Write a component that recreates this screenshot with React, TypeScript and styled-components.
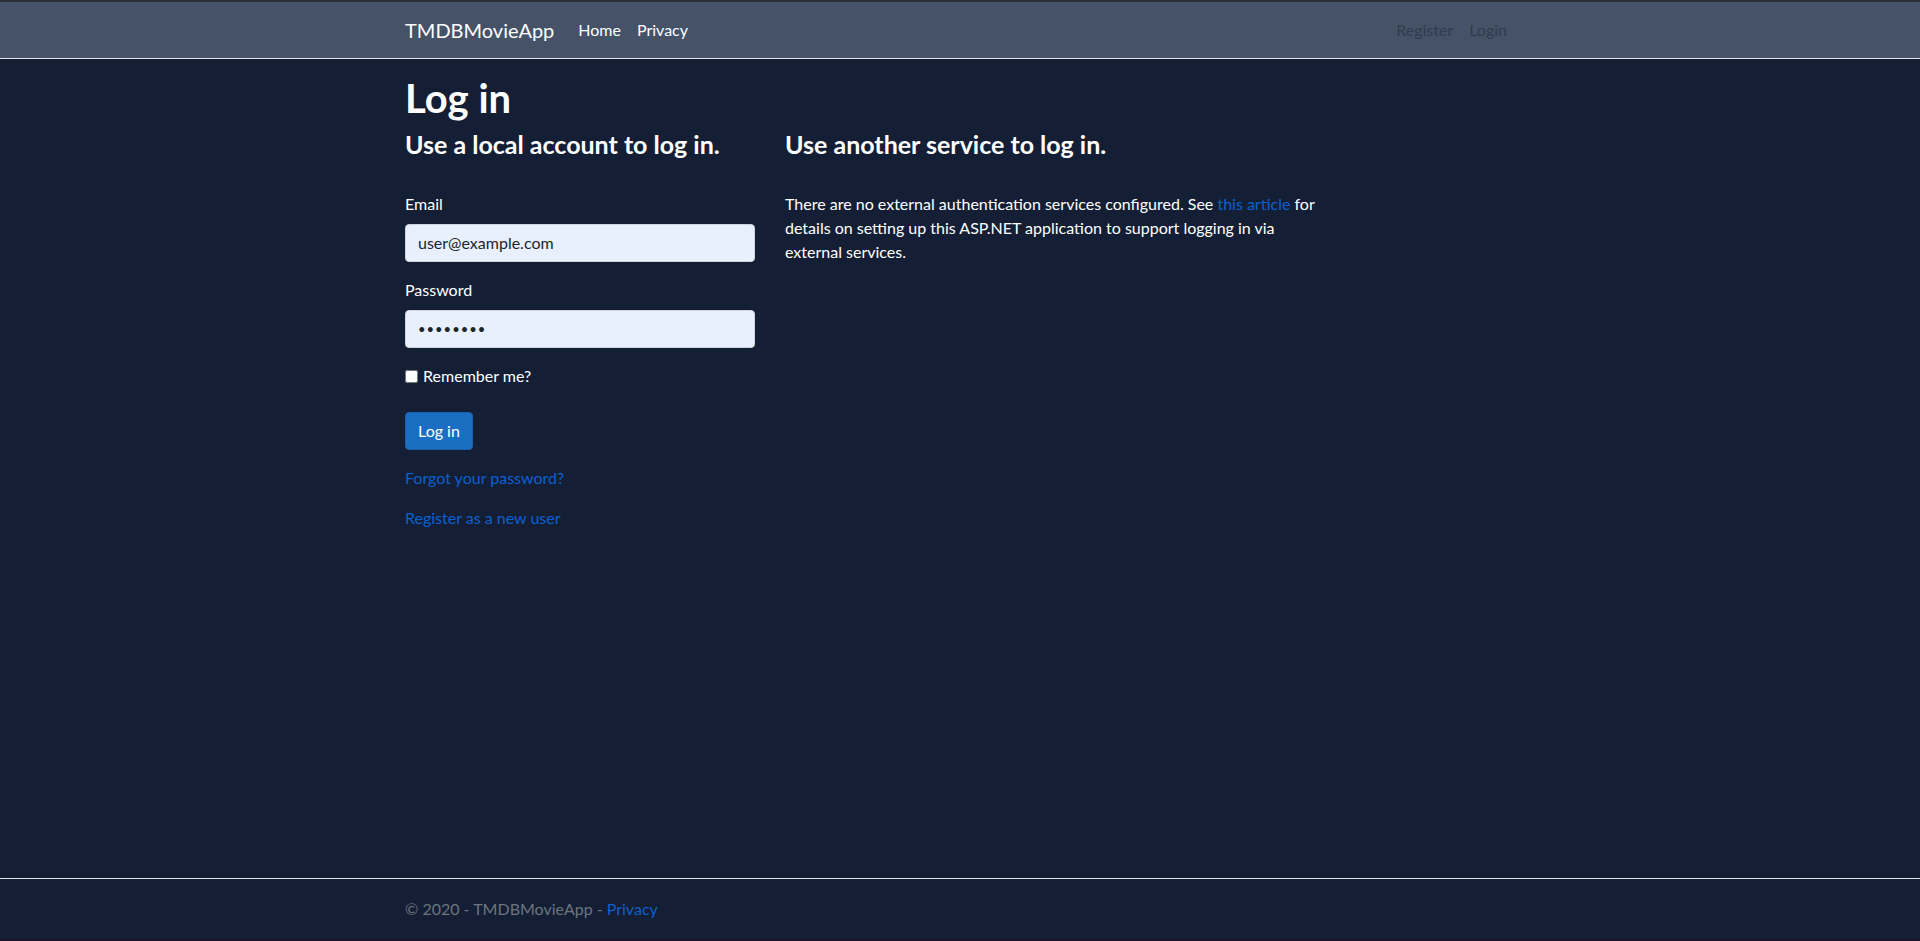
import styled, { createGlobalStyle } from "styled-components";

const GlobalStyle = createGlobalStyle`
  html, body {
    margin: 0;
    padding: 0;
  }
  body {
    background: #141f36;
    color: #ffffff;
    font-family: Lato, "Noto Sans", sans-serif;
    font-size: 16px;
    line-height: 1.5;
  }
  * {
    box-sizing: border-box;
  }
`;

const App = () => {
  return (
    <>
      <GlobalStyle />
      <Page>
        <NavBar>
          <Container>
            <NavLeft>
              <Brand href="#">TMDBMovieApp</Brand>
              <NavLink href="#">Home</NavLink>
              <NavLink href="#">Privacy</NavLink>
            </NavLeft>
            <NavRight>
              <NavLink href="#" $muted>Register</NavLink>
              <NavLink href="#" $muted>Login</NavLink>
            </NavRight>
          </Container>
        </NavBar>

        <Main>
          <Container $block>
            <Title>Log in</Title>
            <Row>
              <LeftCol>
                <SubTitle>Use a local account to log in.</SubTitle>
                <Rule />
                <FormGroup>
                  <Label htmlFor="email">Email</Label>
                  <Input id="email" type="email" defaultValue="user@example.com" />
                </FormGroup>
                <FormGroup>
                  <Label htmlFor="password">Password</Label>
                  <Input id="password" type="password" defaultValue="password" $dots />
                </FormGroup>
                <FormGroup>
                  <CheckLabel>
                    <input type="checkbox" /> Remember me?
                  </CheckLabel>
                </FormGroup>
                <FormGroup>
                  <Button type="button">Log in</Button>
                </FormGroup>
                <Para>
                  <Link href="#">Forgot your password?</Link>
                </Para>
                <Para>
                  <Link href="#">Register as a new user</Link>
                </Para>
              </LeftCol>
              <RightCol>
                <SubTitle>Use another service to log in.</SubTitle>
                <Rule />
                <Para>
                  There are no external authentication services configured. See{" "}
                  <Link href="#">this article</Link> for details on setting up this ASP.NET
                  application to support logging in via external services.
                </Para>
              </RightCol>
            </Row>
          </Container>
        </Main>

        <Footer>
          <Container $block>
            © 2020 - TMDBMovieApp - <Link href="#">Privacy</Link>
          </Container>
        </Footer>
      </Page>
    </>
  );
};

export default App;

const Page = styled.div`
  min-height: 100vh;
  display: flex;
  flex-direction: column;
`;

const Container = styled.div<{ $block?: boolean }>`
  width: 1140px;
  margin: 0 auto;
  padding: 0 15px;
  display: ${(p) => (p.$block ? "block" : "flex")};
  align-items: center;
  justify-content: space-between;
`;

const NavBar = styled.nav`
  background: #455268;
  border-top: 2px solid #2c2f36;
  border-bottom: 1px solid #dfe6f0;
  padding: 8px 0;
  margin-bottom: 15px;
`;

const NavLeft = styled.div`
  display: flex;
  align-items: center;
`;

const NavRight = styled.div`
  display: flex;
  align-items: center;
`;

const Brand = styled.a`
  font-size: 20px;
  line-height: 30px;
  padding: 5px 0;
  margin-right: 16px;
  color: #ffffff;
  text-decoration: none;
`;

const NavLink = styled.a<{ $muted?: boolean }>`
  padding: 8px;
  color: ${(p) => (p.$muted ? "#323c4d" : "#ffffff")};
  text-decoration: none;
`;

const Main = styled.main`
  flex: 1;
`;

const Title = styled.h1`
  font-size: 40px;
  font-weight: 700;
  line-height: 1.2;
  margin: 0 0 8px;
`;

const Row = styled.div`
  display: flex;
  margin: 0 -15px;
`;

const LeftCol = styled.section`
  width: 380px;
  padding: 0 15px;
`;

const RightCol = styled.section`
  width: 570px;
  padding: 0 15px;
`;

const SubTitle = styled.h4`
  font-size: 25px;
  font-weight: 700;
  line-height: 28.8px;
  margin: 0;
`;

const Rule = styled.hr`
  margin: 16px 0;
  border: 0;
  border-top: 1px solid rgba(255, 255, 255, 0.015);
`;

const FormGroup = styled.div`
  margin-bottom: 16px;
`;

const Label = styled.label`
  display: inline-block;
  margin-bottom: 8px;
`;

const CheckLabel = styled.label`
  display: inline-block;
  margin-bottom: 8px;

  input {
    margin: 0 1px 0 0;
    width: 13px;
    height: 13px;
    vertical-align: -1px;
  }
`;

const Input = styled.input<{ $dots?: boolean }>`
  display: block;
  width: 100%;
  height: 38px;
  padding: 6px 12px;
  font-family: inherit;
  font-size: ${(p) => (p.$dots ? "13px" : "16px")};
  line-height: 1.5;
  letter-spacing: ${(p) => (p.$dots ? "1px" : "0")};
  color: #212529;
  background: #e8f0fe;
  border: 1px solid #ced4da;
  border-radius: 4px;
  outline: none;
`;

const Button = styled.button`
  height: 38px;
  padding: 6px 12px;
  font-family: inherit;
  font-size: 16px;
  line-height: 1.5;
  color: #ffffff;
  background: #1b6ec2;
  border: 1px solid #1861ac;
  border-radius: 4px;
  cursor: pointer;
`;

const Para = styled.p`
  margin: 0 0 16px;
`;

const Link = styled.a`
  color: #0d5fd0;
  text-decoration: none;
`;

const Footer = styled.footer`
  border-top: 1px solid #dfe6f0;
  border-bottom: 2px solid #1b1528;
  line-height: 60px;
  white-space: nowrap;
  color: #6c757d;
`;
